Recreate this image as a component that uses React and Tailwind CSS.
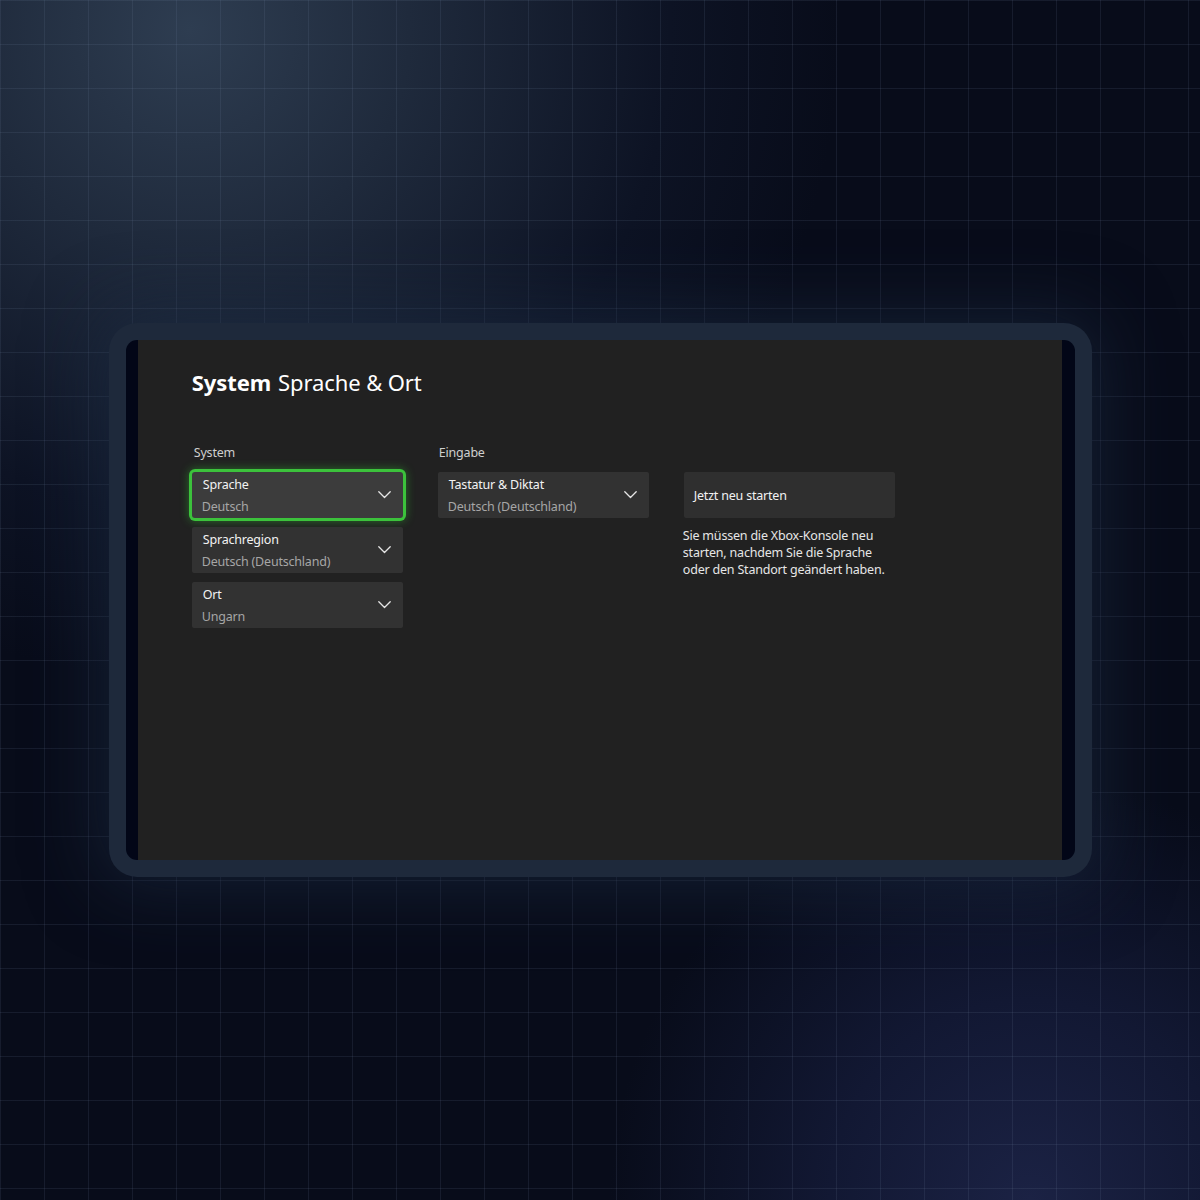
import React from "react";

function Chevron() {
  return (
    <svg width="13" height="8" viewBox="0 0 13 8" fill="none" className="shrink-0">
      <polyline points="0.8,0.8 6.5,6.5 12.2,0.8" stroke="#e6e6e6" strokeWidth="1.3" strokeLinecap="round" strokeLinejoin="round" />
    </svg>
  );
}

function Dropdown({ title, value, focused }) {
  return (
    <div
      className={
        "h-[46px] w-[211px] flex items-center justify-between pl-[11px] pr-[12px] rounded-[2px] " +
        (focused
          ? "bg-[#3c3c3c] ring-3 ring-[#3cc23c] shadow-[0_0_10px_3px_rgba(50,200,50,0.45)] rounded-[3px]"
          : "bg-[#323232]")
      }
    >
      <div className="flex flex-col pt-[2px]">
        <span className="text-[12.5px] tracking-[-0.2px] leading-[22px] text-[#f2f2f2]">{title}</span>
        <span className="text-[12.5px] tracking-[-0.2px] leading-[22px] text-[#a6a6a6] -ml-[1px]">{value}</span>
      </div>
      <Chevron />
    </div>
  );
}

export default function App() {
  return (
    <div
      className="min-h-screen w-full flex items-center justify-center bg-[#080c1a] bg-[linear-gradient(to_right,rgba(120,140,170,0.13)_1px,transparent_1px),linear-gradient(to_bottom,rgba(120,140,170,0.13)_1px,transparent_1px),radial-gradient(circle_at_190px_30px,#2e3d51_0px,#1f2a3c_220px,#0d1324_480px,transparent_650px),radial-gradient(circle_at_1030px_1200px,#1b2244_0px,#121833_200px,transparent_420px)] bg-[size:44px_44px,44px_44px,100%_100%,100%_100%]"
      style={{ fontFamily: '"Noto Sans", "Open Sans", sans-serif' }}
    >
      <div className="rounded-[28px] bg-[#1e293b] p-[17px] shadow-[0_0_70px_10px_rgba(30,45,70,0.55)]">
        <div className="w-[949px] h-[520px] rounded-[11px] bg-[#020617] flex justify-center overflow-hidden">
          <div className="h-full aspect-video bg-[#212121] pl-[54px] pt-[26px]">
            <h1 className="text-[22px] leading-[32px] text-white tracking-[-0.1px]">
              <span className="font-bold">System</span>
              <span className="ml-[7px]">Sprache &amp; Ort</span>
            </h1>
            <div className="mt-[44px] flex gap-[35px]">
              <div className="flex flex-col w-[211px]">
                <div className="text-[12.5px] tracking-[-0.2px] leading-[20px] pt-[1px] h-[20px] text-[#cfcfcf] pl-[2px] mb-[10px]">System</div>
                <div className="flex flex-col gap-[9px]">
                  <Dropdown title="Sprache" value="Deutsch" focused />
                  <Dropdown title="Sprachregion" value="Deutsch (Deutschland)" />
                  <Dropdown title="Ort" value="Ungarn" />
                </div>
              </div>
              <div className="flex flex-col w-[211px]">
                <div className="text-[12.5px] tracking-[-0.2px] leading-[20px] pt-[1px] h-[20px] text-[#cfcfcf] pl-[1px] mb-[10px]">Eingabe</div>
                <Dropdown title="Tastatur & Diktat" value="Deutsch (Deutschland)" />
              </div>
              <div className="flex flex-col w-[211px]">
                <div className="h-[20px] mb-[10px]"></div>
                <button className="h-[46px] w-[211px] bg-[#2f2f2f] rounded-[2px] text-left pl-[10px] pt-[2px] text-[12.5px] tracking-[-0.2px] text-[#f2f2f2]">
                  Jetzt neu starten
                </button>
                <p className="mt-[9px] text-[12.5px] tracking-[-0.2px] leading-[17px] text-[#e6e6e6] w-[211px] -ml-[1px]">
                  Sie müssen die Xbox-Konsole neu starten, nachdem Sie die Sprache oder den Standort geändert haben.
                </p>
              </div>
            </div>
          </div>
        </div>
      </div>
    </div>
  );
}
